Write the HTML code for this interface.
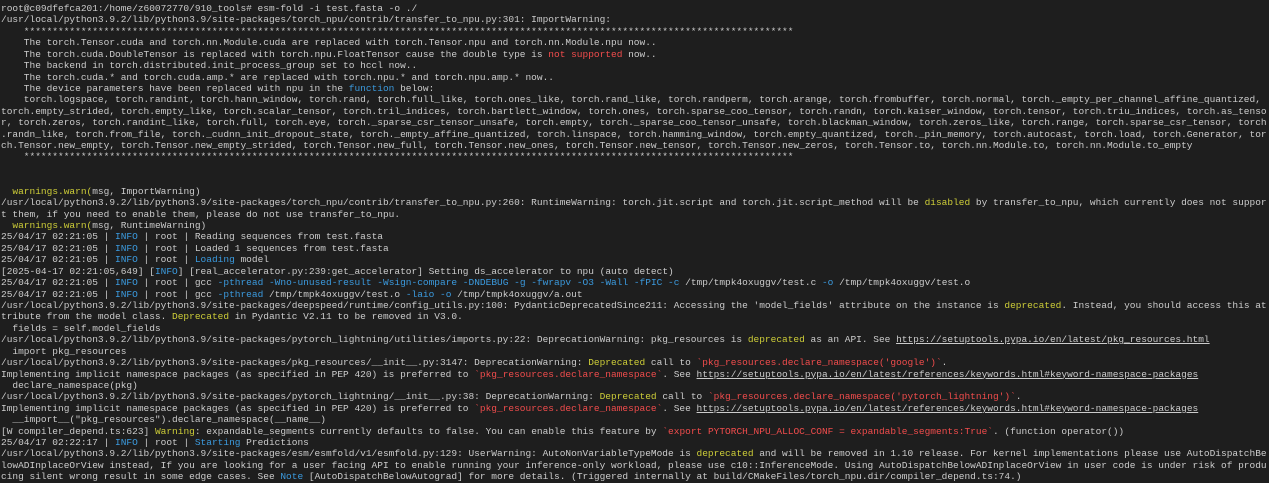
<!DOCTYPE html>
<html><head><meta charset="utf-8">
<style>
html,body{margin:0;padding:0;background:#1e1e1e;width:1269px;height:483px;overflow:hidden}
pre{margin:0;padding:3px 0 0 1px;font-family:"Liberation Mono","DejaVu Sans Mono",monospace;font-size:9.5px;line-height:11.42px;color:#cccccc;white-space:pre}
.r{color:#f14c4c}.b{color:#3b9ade}.y{color:#cdcd38}.u{text-decoration:underline}
</style></head><body>
<pre>root@c09dfefca201:/home/z60072770/910_tools# esm-fold -i test.fasta -o ./
/usr/local/python3.9.2/lib/python3.9/site-packages/torch_npu/contrib/transfer_to_npu.py:301: ImportWarning:
    ***************************************************************************************************************************************
    The torch.Tensor.cuda and torch.nn.Module.cuda are replaced with torch.Tensor.npu and torch.nn.Module.npu now..
    The torch.cuda.DoubleTensor is replaced with torch.npu.FloatTensor cause the double type is <span class="r">not supported</span> now..
    The backend in torch.distributed.init_process_group set to hccl now..
    The torch.cuda.* and torch.cuda.amp.* are replaced with torch.npu.* and torch.npu.amp.* now..
    The device parameters have been replaced with npu in the <span class="b">function</span> below:
    torch.logspace, torch.randint, torch.hann_window, torch.rand, torch.full_like, torch.ones_like, torch.rand_like, torch.randperm, torch.arange, torch.frombuffer, torch.normal, torch._empty_per_channel_affine_quantized,
torch.empty_strided, torch.empty_like, torch.scalar_tensor, torch.tril_indices, torch.bartlett_window, torch.ones, torch.sparse_coo_tensor, torch.randn, torch.kaiser_window, torch.tensor, torch.triu_indices, torch.as_tenso
r, torch.zeros, torch.randint_like, torch.full, torch.eye, torch._sparse_csr_tensor_unsafe, torch.empty, torch._sparse_coo_tensor_unsafe, torch.blackman_window, torch.zeros_like, torch.range, torch.sparse_csr_tensor, torch
.randn_like, torch.from_file, torch._cudnn_init_dropout_state, torch._empty_affine_quantized, torch.linspace, torch.hamming_window, torch.empty_quantized, torch._pin_memory, torch.autocast, torch.load, torch.Generator, tor
ch.Tensor.new_empty, torch.Tensor.new_empty_strided, torch.Tensor.new_full, torch.Tensor.new_ones, torch.Tensor.new_tensor, torch.Tensor.new_zeros, torch.Tensor.to, torch.nn.Module.to, torch.nn.Module.to_empty
    ***************************************************************************************************************************************


  <span class="y">warnings.warn(</span>msg, ImportWarning)
/usr/local/python3.9.2/lib/python3.9/site-packages/torch_npu/contrib/transfer_to_npu.py:260: RuntimeWarning: torch.jit.script and torch.jit.script_method will be <span class="y">disabled</span> by transfer_to_npu, which currently does not suppor
t them, if you need to enable them, please do not use transfer_to_npu.
  <span class="y">warnings.warn(</span>msg, RuntimeWarning)
25/04/17 02:21:05 | <span class="b">INFO</span> | root | Reading sequences from test.fasta
25/04/17 02:21:05 | <span class="b">INFO</span> | root | Loaded 1 sequences from test.fasta
25/04/17 02:21:05 | <span class="b">INFO</span> | root | <span class="b">Loading</span> model
[2025-04-17 02:21:05,649] [<span class="b">INFO</span>] [real_accelerator.py:239:get_accelerator] Setting ds_accelerator to npu (auto detect)
25/04/17 02:21:05 | <span class="b">INFO</span> | root | gcc <span class="b">-pthread -Wno-unused-result -Wsign-compare -DNDEBUG -g -fwrapv -O3 -Wall -fPIC -c</span> /tmp/tmpk4oxuggv/test.c <span class="b">-o</span> /tmp/tmpk4oxuggv/test.o
25/04/17 02:21:05 | <span class="b">INFO</span> | root | gcc <span class="b">-pthread</span> /tmp/tmpk4oxuggv/test.o <span class="b">-laio -o</span> /tmp/tmpk4oxuggv/a.out
/usr/local/python3.9.2/lib/python3.9/site-packages/deepspeed/runtime/config_utils.py:100: PydanticDeprecatedSince211: Accessing the 'model_fields' attribute on the instance is <span class="y">deprecated</span>. Instead, you should access this at
tribute from the model class. <span class="y">Deprecated</span> in Pydantic V2.11 to be removed in V3.0.
  fields = self.model_fields
/usr/local/python3.9.2/lib/python3.9/site-packages/pytorch_lightning/utilities/imports.py:22: DeprecationWarning: pkg_resources is <span class="y">deprecated</span> as an API. See <span class="u">https://setuptools.pypa.io/en/latest/pkg_resources.html</span>
  import pkg_resources
/usr/local/python3.9.2/lib/python3.9/site-packages/pkg_resources/__init__.py:3147: DeprecationWarning: <span class="y">Deprecated</span> call to <span class="r">`pkg_resources.declare_namespace('google')`</span>.
Implementing implicit namespace packages (as specified in PEP 420) is preferred to <span class="r">`pkg_resources.declare_namespace`</span>. See <span class="u">https://setuptools.pypa.io/en/latest/references/keywords.html#keyword-namespace-packages</span>
  declare_namespace(pkg)
/usr/local/python3.9.2/lib/python3.9/site-packages/pytorch_lightning/__init__.py:38: DeprecationWarning: <span class="y">Deprecated</span> call to <span class="r">`pkg_resources.declare_namespace('pytorch_lightning')`</span>.
Implementing implicit namespace packages (as specified in PEP 420) is preferred to <span class="r">`pkg_resources.declare_namespace`</span>. See <span class="u">https://setuptools.pypa.io/en/latest/references/keywords.html#keyword-namespace-packages</span>
  __import__("pkg_resources").declare_namespace(__name__)
[W compiler_depend.ts:623] <span class="y">Warning</span>: expandable_segments currently defaults to false. You can enable this feature by <span class="r">`export PYTORCH_NPU_ALLOC_CONF = expandable_segments:True`</span>. (function operator())
25/04/17 02:22:17 | <span class="b">INFO</span> | root | <span class="b">Starting</span> Predictions
/usr/local/python3.9.2/lib/python3.9/site-packages/esm/esmfold/v1/esmfold.py:129: UserWarning: AutoNonVariableTypeMode is <span class="y">deprecated</span> and will be removed in 1.10 release. For kernel implementations please use AutoDispatchBe
lowADInplaceOrView instead, If you are looking for a user facing API to enable running your inference-only workload, please use c10::InferenceMode. Using AutoDispatchBelowADInplaceOrView in user code is under risk of produ
cing silent wrong result in some edge cases. See <span class="b">Note</span> [AutoDispatchBelowAutograd] for more details. (Triggered internally at build/CMakeFiles/torch_npu.dir/compiler_depend.ts:74.)
  esmaa[range(batch_size), (esmaa != 1).sum(1)] = eosi</pre>
</body></html>
